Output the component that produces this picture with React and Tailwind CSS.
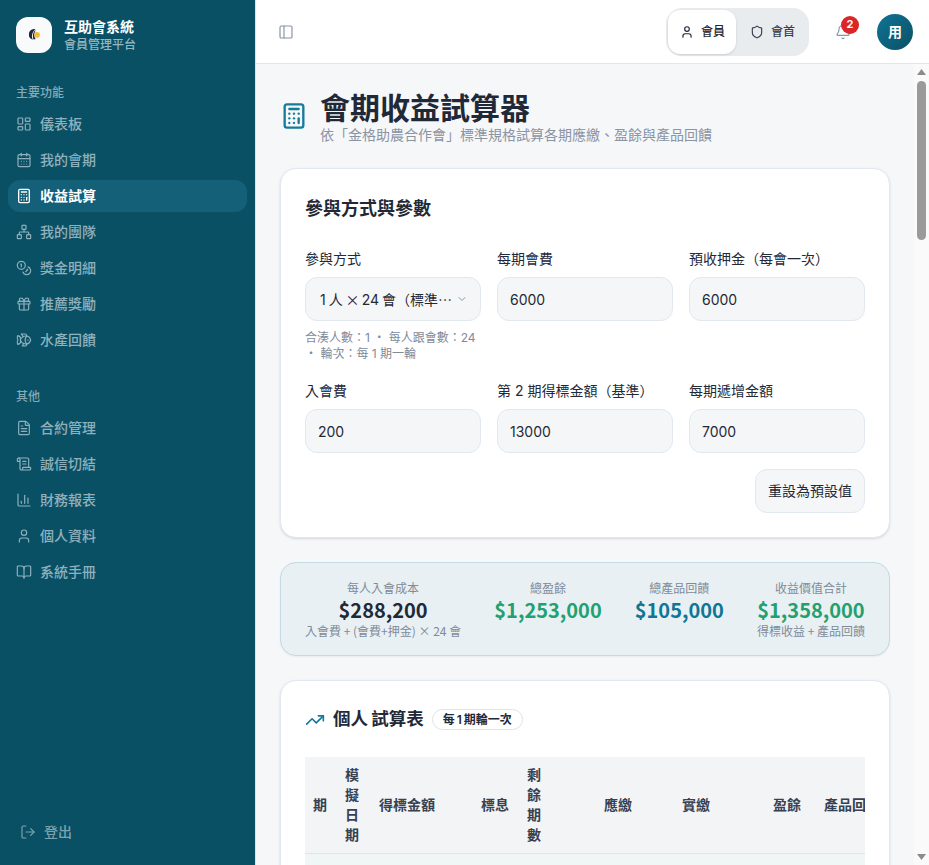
import React from "react";
import {
  LayoutDashboard, CalendarDays, Calculator, Network, Coins, Gift, Fish, FileText,
  ScrollText, ChartColumn, User, BookOpen, LogOut, PanelLeft, Shield, Bell, TrendingUp, ChevronDown,
} from "lucide-react";

const mainNav = [
  [LayoutDashboard, "儀表板"],
  [CalendarDays, "我的會期"],
  [Calculator, "收益試算", true],
  [Network, "我的團隊"],
  [Coins, "獎金明細"],
  [Gift, "推薦獎勵"],
  [Fish, "水產回饋"],
];
const otherNav = [
  [FileText, "合約管理"],
  [ScrollText, "誠信切結"],
  [ChartColumn, "財務報表"],
  [User, "個人資料"],
  [BookOpen, "系統手冊"],
];

function NavItem({ icon: Icon, label, active }) {
  return (
    <div className={`flex h-8 items-center gap-2 rounded-xl px-2 text-sm ${active ? "bg-[#146078] font-bold text-white" : "font-medium text-[#8fb1bd]"}`}>
      <Icon className="h-4 w-4 shrink-0" strokeWidth={active ? 2 : 1.75} />
      <span>{label}</span>
    </div>
  );
}

function Field({ label, value }) {
  return (
    <div className="flex flex-col gap-2">
      <label className="text-sm leading-5 font-normal text-[#1f2937]">{label}</label>
      <input
        readOnly
        value={value}
        className="h-11 w-full rounded-xl border border-[#e2e8f0] bg-[#f5f6f8] px-3 text-sm text-[#1f2937] outline-none"
      />
    </div>
  );
}

function Stat({ label, value, color, sub }) {
  return (
    <div className="flex flex-col items-center text-center font-['Noto_Sans_CJK_TC',sans-serif]">
      <div className="text-xs leading-4 text-[#7f8b99]">{label}</div>
      <div className={`text-xl leading-7 font-bold ${color}`}>{value}</div>
      <div className="h-[14px] text-xs leading-[14px] whitespace-nowrap text-[#7f8b99]">{sub}</div>
    </div>
  );
}

const fmt = (n) => "$" + n.toLocaleString("en-US");
const rows = Array.from({ length: 24 }, (_, i) => ({
  p: i + 1,
  date: `第 ${i + 1} 期`,
  bid: i === 0 ? 0 : 13000 + (i - 1) * 7000,
  fee: i === 0 ? 200 : 6000,
  left: 23 - i,
}));

function ScheduleCard({ title, badge }) {
  return (
    <section className="rounded-2xl border border-[#e2e8f0] bg-white p-6 shadow-sm">
      <div className="flex h-[29px] items-center gap-2">
        <TrendingUp className="h-5 w-5 text-[#157a9c]" strokeWidth={2} />
        <h2 className="text-[17.5px] font-bold text-[#1f2937] [word-spacing:-1px]">{title}</h2>
        <span className="rounded-full border border-[#dde3ea] px-[10px] text-xs leading-[19px] font-semibold text-[#1f2937] [word-spacing:-1px]">{badge}</span>
      </div>
      <div className="mt-[23px] overflow-x-auto">
        <table className="w-[583px] table-fixed border-collapse text-sm text-[#1f2937]">
          <colgroup>
            <col className="w-[30px]" /><col className="w-[34px]" /><col className="w-[74px]" /><col className="w-[74px]" />
            <col className="w-[34px]" /><col className="w-[89px]" /><col className="w-[78px]" /><col className="w-[91px]" /><col className="w-[79px]" />
          </colgroup>
          <thead>
            <tr className="border-b border-[#dfe5e8] bg-[#f3f4f6] leading-5 font-bold text-[#374151]">
              <th className="px-2 py-2 text-center font-semibold">期</th>
              <th className="px-2 py-2 text-center font-semibold">模擬日期</th>
              <th className="px-2 py-2 text-right font-semibold">得標金額</th>
              <th className="px-2 py-2 text-right font-semibold">標息</th>
              <th className="px-2 py-2 text-center font-semibold">剩餘期數</th>
              <th className="px-2 py-2 text-right font-semibold">應繳</th>
              <th className="px-2 py-2 text-right font-semibold">實繳</th>
              <th className="px-2 py-2 text-right font-semibold">盈餘</th>
              <th className="px-2 py-2 text-right font-semibold whitespace-nowrap">產品回饋</th>
            </tr>
          </thead>
          <tbody>
            {rows.map((r) => (
              <tr key={r.p} className={`h-[56px] border-b border-[#eef0f3] ${r.p === 1 ? "bg-[#eff6f5]" : ""}`}>
                <td className="px-2 text-center">{r.p}</td>
                <td className="px-1 text-center text-xs">{r.date}</td>
                <td className="px-2 text-right">{fmt(r.bid)}</td>
                <td className="px-2 text-right">{fmt(r.bid ? 7000 : 0)}</td>
                <td className="px-2 text-center">{r.left}</td>
                <td className="px-2 text-right">{fmt(r.fee)}</td>
                <td className="px-2 text-right">{fmt(r.fee)}</td>
                <td className="px-2 text-right">{fmt(r.bid)}</td>
                <td className="px-2 text-right">$4,375</td>
              </tr>
            ))}
          </tbody>
        </table>
      </div>
    </section>
  );
}

function ScrollbarRail() {
  return (
    <div className="flex w-[15px] shrink-0 flex-col items-center bg-[#fafafa]">
      <svg viewBox="0 0 9 6" className="mt-[5px] h-[6px] w-[9px] fill-[#8c8c8c]"><path d="M4.5 0 9 6H0Z" /></svg>
      <div className="mt-[6px] h-[159px] w-[9px] rounded-full bg-[#9a9a9a]" />
      <svg viewBox="0 0 9 6" className="mt-auto mb-[5px] h-[6px] w-[9px] fill-[#8c8c8c]"><path d="M0 0H9L4.5 6Z" /></svg>
    </div>
  );
}

export default function App() {
  return (
    <div className="flex h-[865px] w-full overflow-hidden bg-[#f6f7f9] font-['Inter','Noto_Sans_CJK_TC',sans-serif]">
      <aside className="flex w-64 shrink-0 flex-col border-r border-[#dfe3e7] bg-[#0a5064]">
        <div className="flex items-center gap-3 px-4 pt-4">
          <div className="flex h-9 w-9 items-center justify-center rounded-xl bg-[#f8fafc]">
            <svg viewBox="0 0 11 11" className="h-[11px] w-[11px]">
              <path d="M6.5 0.2A5.4 5.4 0 0 0 3.8 10.8C2.2 8 2.8 3 6.5 0.2Z" fill="#1f2937" />
              <path d="M6.8 1C4 2.4 3.3 7 4.6 10.6L6.8 10C4.8 8 5 4 6.8 1Z" fill="#1f2937" />
              <circle cx="8" cy="5.8" r="2.9" fill="#efbb3a" />
            </svg>
          </div>
          <div className="pt-px">
            <div className="text-sm leading-5 font-bold text-white">互助會系統</div>
            <div className="text-xs leading-4 font-medium text-[#94b6c1]">會員管理平台</div>
          </div>
        </div>
        <nav className="mt-8 flex flex-1 flex-col px-2">
          <div className="mb-[7px] px-2 text-xs leading-4 font-medium text-[#86abb7]">主要功能</div>
          <div className="flex flex-col gap-1">
            {mainNav.map(([icon, label, active]) => (
              <NavItem key={label} icon={icon} label={label} active={active} />
            ))}
          </div>
          <div className="mt-[33px] mb-[7px] px-2 text-xs leading-4 font-medium text-[#86abb7]">其他</div>
          <div className="flex flex-col gap-1">
            {otherNav.map(([icon, label]) => (
              <NavItem key={label} icon={icon} label={label} />
            ))}
          </div>
        </nav>
        <div className="mb-[15px] flex h-9 items-center gap-2 pr-3 pl-[20px] text-sm font-medium text-[#7da3ae]">
          <LogOut className="h-4 w-4" strokeWidth={1.75} />
          <span>登出</span>
        </div>
      </aside>

      <div className="flex min-w-0 flex-1 flex-col">
        <header className="flex h-16 shrink-0 items-center justify-between border-b border-[#e3e6ea] bg-white pr-4 pl-[22px]">
          <PanelLeft className="h-4 w-4 text-[#8a94a3]" strokeWidth={1.75} />
          <div className="flex items-center">
            <div className="flex h-12 items-center rounded-2xl bg-[#e9ecef] p-[2px]">
              <div className="flex h-11 w-[68px] items-center justify-start gap-[7px] rounded-xl bg-white pl-3 text-xs font-medium text-[#1f2937] shadow-sm">
                <User className="h-[14px] w-[14px]" strokeWidth={2} />
                <span>會員</span>
              </div>
              <div className="flex h-11 w-[71px] items-center justify-start gap-[7px] pl-[14px] text-xs font-medium text-[#374151]">
                <Shield className="h-[14px] w-[14px]" strokeWidth={2} />
                <span>會首</span>
              </div>
            </div>
            <div className="relative mr-[26px] ml-[26px] flex h-4 w-4 items-center justify-center">
              <Bell className="h-4 w-4 text-[#8a94a3]" strokeWidth={1.75} />
              <span className="absolute -top-[8px] -right-[8px] flex h-[18px] w-[18px] items-center justify-center rounded-full bg-[#dc2626] text-[11px] font-bold text-white">2</span>
            </div>
            <div className="flex h-9 w-9 items-center justify-center rounded-full bg-gradient-to-br from-[#0f7596] to-[#0a5064] text-sm font-bold text-white">用</div>
          </div>
        </header>

        <div className="flex min-h-0 flex-1">
          <main className="min-w-0 flex-1 overflow-y-auto">
            <div className="flex flex-col gap-6 p-6">
              <div className="flex items-center gap-3">
                <Calculator className="h-7 w-7 text-[#157a9c]" strokeWidth={2} />
                <div>
                  <h1 className="pt-1 text-3xl leading-8 font-bold text-[#1f2937]">會期收益試算器</h1>
                  <p className="pt-px text-sm leading-[19px] text-[#8a94a3]">依「金格助農合作會」標準規格試算各期應繳、盈餘與產品回饋</p>
                </div>
              </div>

              <section className="rounded-2xl border border-[#e2e8f0] bg-white p-6 shadow-sm">
                <h2 className="pt-[2px] text-lg leading-7 font-bold text-[#1f2937]">參與方式與參數</h2>
                <div className="mt-[26px] grid grid-cols-3 gap-x-4 gap-y-[19px]">
                  <div className="flex flex-col gap-2">
                    <label className="text-sm leading-5 font-normal text-[#1f2937]">參與方式</label>
                    <div className="flex h-11 items-center gap-[2px] rounded-xl border border-[#e2e8f0] bg-[#f5f6f8] pr-3 pl-[14px] text-sm text-[#1f2937]">
                      <span className="min-w-0 flex-1 truncate font-['Noto_Sans_CJK_TC',sans-serif] [word-spacing:-1px]">
                        <span className="font-['Inter','Noto_Sans_CJK_TC',sans-serif]">1 人 </span>× <span className="font-['Inter','Noto_Sans_CJK_TC',sans-serif]">24 會（標準方案）</span>
                      </span>
                      <ChevronDown className="h-3 w-3 shrink-0 text-[#8a94a3]" />
                    </div>
                    <p className="mt-px text-xs leading-4 text-[#7f8b99]">合湊人數：1 ・ 每人跟會數：24 ・ 輪次：每 1 期一輪</p>
                  </div>
                  <Field label="每期會費" value="6000" />
                  <Field label="預收押金（每會一次）" value="6000" />
                  <Field label="入會費" value="200" />
                  <Field label="第 2 期得標金額（基準）" value="13000" />
                  <Field label="每期遞增金額" value="7000" />
                </div>
                <div className="mt-4 flex justify-end">
                  <button className="h-11 rounded-xl border border-[#e2e8f0] bg-[#f5f6f8] px-3 text-sm font-normal text-[#1f2937]">重設為預設值</button>
                </div>
              </section>

              <section className="flex items-center justify-between rounded-2xl border border-[#c3dbe4] bg-[#e8f0f3] px-6 py-[17px] shadow-xs">
                <Stat label="每人入會成本" value="$288,200" color="text-[#1f2937]" sub="入會費 + (會費+押金) × 24 會" />
                <Stat label="總盈餘" value="$1,253,000" color="text-[#23a06f]" />
                <Stat label="總產品回饋" value="$105,000" color="text-[#117596]" />
                <Stat label="收益價值合計" value="$1,358,000" color="text-[#23a06f]" sub="得標收益 + 產品回饋" />
              </section>

              <ScheduleCard title="個人 試算表" badge="每 1 期輪一次" />
            </div>
          </main>
          <ScrollbarRail />
        </div>
      </div>
    </div>
  );
}
